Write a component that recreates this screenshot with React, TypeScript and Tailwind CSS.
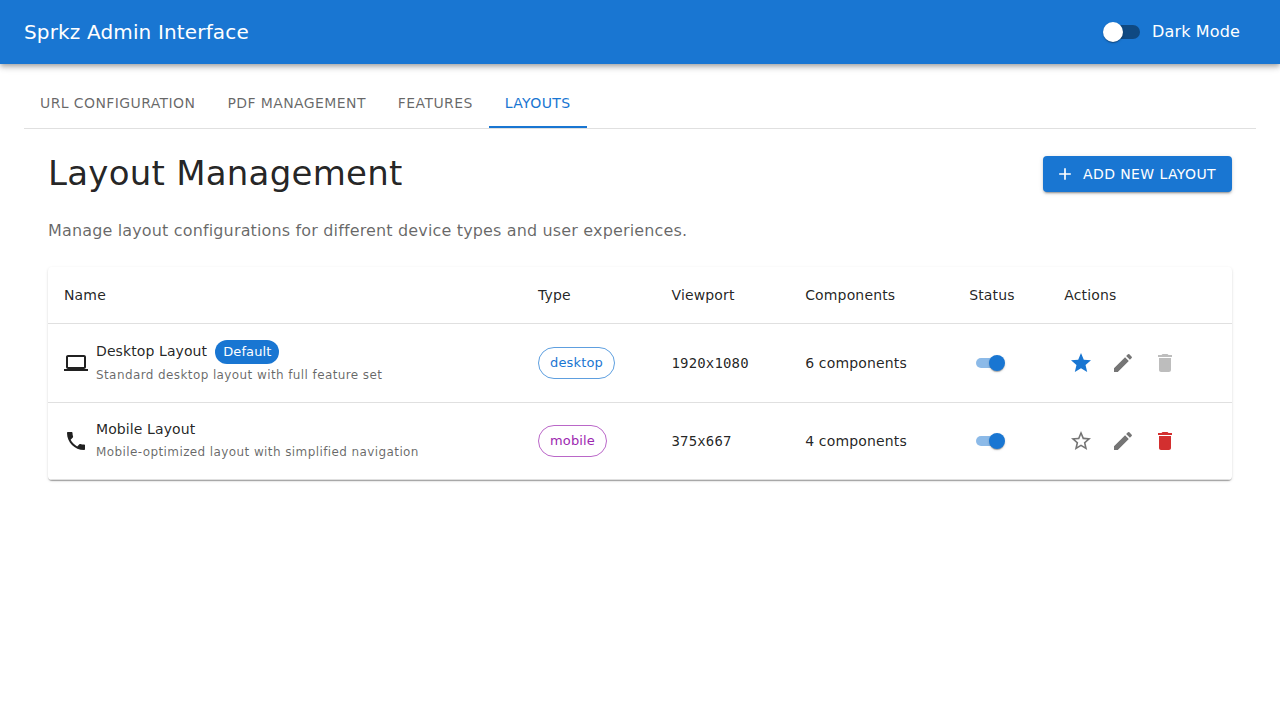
import type { ReactNode } from "react";

const icons = {
  computer:
    "M20 18c1.1 0 1.99-.9 1.99-2L22 6c0-1.1-.9-2-2-2H4c-1.1 0-2 .9-2 2v10c0 1.1.9 2 2 2H0v2h24v-2zM4 6h16v10H4z",
  phone:
    "M6.62 10.79c1.44 2.83 3.76 5.14 6.59 6.59l2.2-2.2c.27-.27.67-.36 1.02-.24 1.12.37 2.33.57 3.57.57.55 0 1 .45 1 1V20c0 .55-.45 1-1 1-9.39 0-17-7.61-17-17 0-.55.45-1 1-1h3.5c.55 0 1 .45 1 1 0 1.25.2 2.45.57 3.57.11.35.03.74-.25 1.02z",
  star: "M12 17.27 18.18 21l-1.64-7.03L22 9.24l-7.19-.61L12 2 9.19 8.63 2 9.24l5.46 4.73L5.82 21z",
  starBorder:
    "m22 9.24-7.19-.62L12 2 9.19 8.63 2 9.24l5.46 4.73L5.82 21 12 17.27 18.18 21l-1.63-7.03zM12 15.4l-3.76 2.27 1-4.28-3.32-2.88 4.38-.38L12 6.1l1.71 4.04 4.38.38-3.32 2.88 1 4.28z",
  edit: "M3 17.25V21h3.75L17.81 9.94l-3.75-3.75zM20.71 7.04c.39-.39.39-1.02 0-1.41l-2.34-2.34a.996.996 0 0 0-1.41 0l-1.83 1.83 3.75 3.75z",
  trash: "M6 19c0 1.1.9 2 2 2h8c1.1 0 2-.9 2-2V7H6zM19 4h-3.5l-1-1h-5l-1 1H5v2h14z",
  add: "M19 13h-6v6h-2v-6H5v-2h6V5h2v6h6z",
};

function Icon({ name, className = "size-6" }: { name: keyof typeof icons; className?: string }) {
  return (
    <svg viewBox="0 0 24 24" fill="currentColor" className={`shrink-0 ${className}`} aria-hidden="true">
      <path d={icons[name]} />
    </svg>
  );
}

function SmallSwitch() {
  return (
    <button role="switch" aria-checked="true" className="flex h-6 w-10 items-center pl-[7px]">
      <span className="h-2.5 w-[26px] shrink-0 rounded-full bg-[#1976d2]/50" />
      <span className="-ml-[13px] size-4 shrink-0 rounded-full bg-[#1976d2] shadow-[0_2px_1px_-1px_rgba(0,0,0,0.2),0_1px_1px_0_rgba(0,0,0,0.14),0_1px_3px_0_rgba(0,0,0,0.12)]" />
    </button>
  );
}

function ActionButton({ label, className, children }: { label: string; className: string; children: ReactNode }) {
  return (
    <button aria-label={label} className={`rounded-full p-[5px] ${className}`}>
      {children}
    </button>
  );
}

const tabs = ["URL Configuration", "PDF Management", "Features", "Layouts"];
const headers = ["Name", "Type", "Viewport", "Components", "Status", "Actions"];

const rows = [
  {
    name: "Desktop Layout",
    description: "Standard desktop layout with full feature set",
    icon: "computer" as const,
    isDefault: true,
    type: "desktop",
    chip: "border-[#1976d2]/70 text-[#1976d2]",
    viewport: "1920x1080",
    components: 6,
    height: "h-[79px]",
  },
  {
    name: "Mobile Layout",
    description: "Mobile-optimized layout with simplified navigation",
    icon: "phone" as const,
    isDefault: false,
    type: "mobile",
    chip: "border-[#9c27b0]/70 text-[#9c27b0]",
    viewport: "375x667",
    components: 4,
    height: "h-[77px]",
  },
];

export default function App() {
  return (
    <div className="min-h-screen bg-white font-['DejaVu_Sans',sans-serif] text-black/87 antialiased">
      <header className="flex h-16 items-center justify-between bg-[#1976d2] px-6 text-white shadow-[0_2px_4px_-1px_rgba(0,0,0,0.2),0_4px_5px_0_rgba(0,0,0,0.14),0_1px_10px_0_rgba(0,0,0,0.12)]">
        <h1 className="text-xl leading-8 tracking-[0.0075em]">Sprkz Admin Interface</h1>
        <label className="mr-4 flex items-center">
          <span className="flex items-center">
            <span className="z-10 size-5 rounded-full bg-white shadow-[0_2px_1px_-1px_rgba(0,0,0,0.2),0_1px_1px_0_rgba(0,0,0,0.14),0_1px_3px_0_rgba(0,0,0,0.12)]" />
            <span className="-ml-[17px] h-3.5 w-[34px] rounded-full bg-black/38" />
          </span>
          <span className="ml-3 text-base leading-6 tracking-[0.00938em]">Dark Mode</span>
        </label>
      </header>

      <div className="px-6 pt-4">
        <nav className="flex border-b border-black/12">
          {tabs.map((tab) => (
            <button
              key={tab}
              className={`h-12 border-b-2 px-4 pt-0.5 text-sm leading-[1.25] tracking-[0.02857em] uppercase ${
                tab === "Layouts" ? "border-[#1976d2] text-[#1976d2]" : "border-transparent text-black/60"
              }`}
            >
              {tab}
            </button>
          ))}
        </nav>

        <main className="p-6">
          <div className="mb-6 flex items-center justify-between">
            <h2 className="pb-0.5 text-[34px] leading-10 tracking-[0.00735em]">Layout Management</h2>
            <button className="flex h-9 items-center gap-2 rounded bg-[#1976d2] px-4 text-sm leading-6 tracking-[0.02857em] text-white uppercase shadow-[0_3px_1px_-2px_rgba(0,0,0,0.2),0_2px_2px_0_rgba(0,0,0,0.14),0_1px_5px_0_rgba(0,0,0,0.12)]">
              <Icon name="add" className="-ml-1 size-5" />
              Add New Layout
            </button>
          </div>

          <p className="mb-6 text-base leading-6 tracking-[0.00938em] text-black/60">
            Manage layout configurations for different device types and user experiences.
          </p>

          <div className="overflow-hidden rounded shadow-[0_2px_1px_-1px_rgba(0,0,0,0.2),0_1px_1px_0_rgba(0,0,0,0.14),0_1px_3px_0_rgba(0,0,0,0.12)]">
            <table className="w-full table-fixed border-separate border-spacing-0 text-left text-sm leading-5 tracking-[0.01071em] [&_td]:border-b [&_td]:border-[#e0e0e0] [&_td]:px-4 [&_td]:py-0 [&_th]:border-b [&_th]:border-[#e0e0e0] [&_th]:px-4">
              <colgroup>
                <col className="w-[474px]" />
                <col className="w-[133.5px]" />
                <col className="w-[133.7px]" />
                <col className="w-[164px]" />
                <col className="w-[95px]" />
                <col />
              </colgroup>
              <thead>
                <tr className="h-[57px]">
                  {headers.map((header) => (
                    <th key={header} className="leading-6 font-normal">
                      {header}
                    </th>
                  ))}
                </tr>
              </thead>
              <tbody>
                {rows.map((row) => (
                  <tr key={row.name} className={row.height}>
                    <td>
                      <div className="flex items-center gap-2">
                        <Icon name={row.icon} />
                        <div>
                          <div className="flex items-center gap-2 tracking-[0.1px]">
                            <span className="pb-0.5 leading-5">{row.name}</span>
                            {row.isDefault && (
                              <span className="flex h-6 items-center rounded-full bg-[#1976d2] px-2 text-[13px] leading-5 text-white">
                                Default
                              </span>
                            )}
                          </div>
                          <p className="text-xs leading-[22px] tracking-[0.03333em] text-black/60">
                            {row.description}
                          </p>
                        </div>
                      </div>
                    </td>
                    <td>
                      <span
                        className={`flex h-8 w-fit items-center rounded-full border px-[11px] text-[13px] leading-5 ${row.chip}`}
                      >
                        {row.type}
                      </span>
                    </td>
                    <td className="font-['DejaVu_Sans_Mono',monospace]">{row.viewport}</td>
                    <td>{row.components} components</td>
                    <td>
                      <SmallSwitch />
                    </td>
                    <td>
                      <div className="flex gap-2">
                        <ActionButton
                          label={row.isDefault ? "Default layout" : "Set as default"}
                          className={row.isDefault ? "text-[#1976d2]" : "text-black/54"}
                        >
                          <Icon name={row.isDefault ? "star" : "starBorder"} />
                        </ActionButton>
                        <ActionButton label="Edit layout" className="text-black/54">
                          <Icon name="edit" />
                        </ActionButton>
                        <ActionButton
                          label="Delete layout"
                          className={row.isDefault ? "text-black/26" : "text-[#d32f2f]"}
                        >
                          <Icon name="trash" />
                        </ActionButton>
                      </div>
                    </td>
                  </tr>
                ))}
              </tbody>
            </table>
          </div>
        </main>
      </div>
    </div>
  );
}
